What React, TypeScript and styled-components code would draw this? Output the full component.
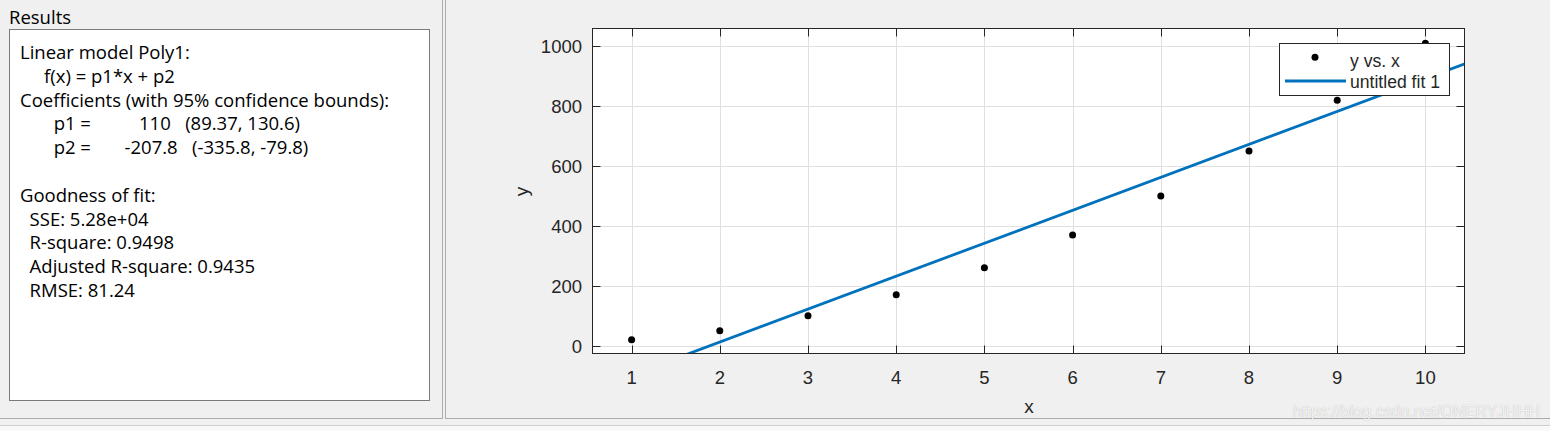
import React from 'react';
import styled, { createGlobalStyle } from 'styled-components';

const GlobalStyle = createGlobalStyle`
    html, body {
        margin: 0;
        padding: 0;
        background: #f0f0f0;
        overflow: hidden;
    }
`

const Window = styled.div`
    width: 1550px;
    height: 431px;
    display: flex;
    flex-direction: column;
    background: #f0f0f0;
`

const Workspace = styled.div`
    display: flex;
    gap: 2px;
    height: 419px;
`

const ResultsPanel = styled.div`
    box-sizing: border-box;
    width: 443px;
    height: 100%;
    padding: 5px 0 0 9px;
    border-right: 1px solid #acacac;
    border-bottom: 1px solid #acacac;
    font-family: "Open Sans", "Noto Sans", sans-serif;
    font-size: 18.5px;
    line-height: 23.8px;
    color: #000;
`

const PanelTitle = styled.div`
    height: 24px;
`

const ResultsBox = styled.pre`
    box-sizing: border-box;
    width: 421px;
    height: 372px;
    margin: 0;
    padding: 10px 10px;
    background: #fff;
    border: 1px solid #7a7a7a;
    font: inherit;
    white-space: pre;
`

const PlotPanel = styled.div`
    position: relative;
    flex: 1;
    height: 100%;
    box-sizing: border-box;
    border-left: 1px solid #acacac;
    border-bottom: 1px solid #acacac;
`

const Watermark = styled.span`
    position: absolute;
    right: 10px;
    bottom: -2px;
    font-family: "Liberation Sans", Arial, sans-serif;
    font-size: 16px;
    line-height: 16px;
    color: rgba(255, 255, 255, 0.85);
    text-shadow: 0 0 1px rgba(0, 0, 0, 0.3);
    white-space: nowrap;
`

const StatusStrip = styled.div`
    flex: 1;
    margin-top: 6px;
    border-top: 1px solid #cfcfcf;
    background: #f8f8f8;
`

const PlotText = styled.text<{ $size?: number }>`
    font-family: "Liberation Sans", Arial, Helvetica, sans-serif;
    font-size: ${p => p.$size ?? 18.5}px;
    fill: #262626;
`

// axes box, in the panel's own pixels
const AX = { left: 146.5, right: 1018.5, top: 28.5, bottom: 353.5 }
const px = (x: number) => 185.6 + (x - 1) * 88.2
const py = (y: number) => 345.7 - y * 0.2994

const xs = [1, 2, 3, 4, 5, 6, 7, 8, 9, 10]
const ys = [20, 50, 100, 170, 260, 370, 500, 650, 820, 1010]
const yTicks = [0, 200, 400, 600, 800, 1000]

const p1 = 110
const p2 = -207.8

const results = `Linear model Poly1:
     f(x) = p1*x + p2
Coefficients (with 95% confidence bounds):
       p1 =          110   (89.37, 130.6)
       p2 =       -207.8   (-335.8, -79.8)

Goodness of fit:
  SSE: 5.28e+04
  R-square: 0.9498
  Adjusted R-square: 0.9435
  RMSE: 81.24`

const FitPlot = () => {
    const x0 = 0.5
    const x1 = 10.5
    return (
        <svg width="1103" height="418" style={{ display: 'block' }}>
            <defs>
                <clipPath id="axes-clip">
                    <rect x={AX.left} y={AX.top} width={AX.right - AX.left} height={AX.bottom - AX.top} />
                </clipPath>
            </defs>
            <rect x={AX.left} y={AX.top} width={AX.right - AX.left} height={AX.bottom - AX.top} fill="#fff" />

            {/* grid */}
            {xs.map(x => (
                <line key={'gx' + x} x1={Math.round(px(x)) + 0.5} x2={Math.round(px(x)) + 0.5} y1={AX.top} y2={AX.bottom} stroke="#dfdfdf" />
            ))}
            {yTicks.map(v => (
                <line key={'gy' + v} x1={AX.left} x2={AX.right} y1={Math.round(py(v)) + 0.5} y2={Math.round(py(v)) + 0.5} stroke="#dfdfdf" />
            ))}

            {/* fitted line and data */}
            <g clipPath="url(#axes-clip)">
                <line x1={px(x0)} y1={py(p1 * x0 + p2)} x2={px(x1)} y2={py(p1 * x1 + p2)} stroke="#0072bd" strokeWidth={2.8} />
                {xs.map((x, i) => (
                    <circle key={'pt' + x} cx={px(x)} cy={py(ys[i])} r={3.5} fill="#000" />
                ))}
            </g>

            {/* ticks */}
            {xs.map(x => {
                const tx = Math.round(px(x)) + 0.5
                return (
                    <g key={'tx' + x} stroke="#262626">
                        <line x1={tx} x2={tx} y1={AX.bottom} y2={AX.bottom - 8} />
                        <line x1={tx} x2={tx} y1={AX.top} y2={AX.top + 8} />
                    </g>
                )
            })}
            {yTicks.map(v => {
                const ty = Math.round(py(v)) + 0.5
                return (
                    <g key={'ty' + v} stroke="#262626">
                        <line x1={AX.left} x2={AX.left + 8} y1={ty} y2={ty} />
                        <line x1={AX.right} x2={AX.right - 8} y1={ty} y2={ty} />
                    </g>
                )
            })}
            <rect x={AX.left} y={AX.top} width={AX.right - AX.left} height={AX.bottom - AX.top} fill="none" stroke="#262626" />

            {/* tick labels */}
            {xs.map(x => (
                <PlotText key={'lx' + x} x={px(x)} y={383.5} textAnchor="middle">{x}</PlotText>
            ))}
            {yTicks.map(v => (
                <PlotText key={'ly' + v} x={136} y={py(v) + 7} textAnchor="end">{v}</PlotText>
            ))}

            <PlotText x={583} y={413} textAnchor="middle" $size={19}>x</PlotText>
            <PlotText x={82} y={191.5} textAnchor="middle" $size={19} transform="rotate(-90 82 191.5)">y</PlotText>

            {/* legend */}
            <rect x={833.5} y={43.5} width={170} height={52} fill="#fff" stroke="#262626" />
            <circle cx={869} cy={57.3} r={3.5} fill="#000" />
            <line x1={839} x2={900} y1={81} y2={81} stroke="#0072bd" strokeWidth={2.8} />
            <PlotText x={904} y={66.7} $size={17.6}>y vs. x</PlotText>
            <PlotText x={904} y={88} $size={17.6}>untitled fit 1</PlotText>
        </svg>
    )
}

const App = () => {
    return (
        <Window>
            <GlobalStyle />
            <Workspace>
                <ResultsPanel>
                    <PanelTitle>Results</PanelTitle>
                    <ResultsBox>{results}</ResultsBox>
                </ResultsPanel>
                <PlotPanel>
                    <FitPlot />
                    <Watermark>https://blog.csdn.net/ONERYJHHH</Watermark>
                </PlotPanel>
            </Workspace>
            <StatusStrip />
        </Window>
    )
}

export default App
